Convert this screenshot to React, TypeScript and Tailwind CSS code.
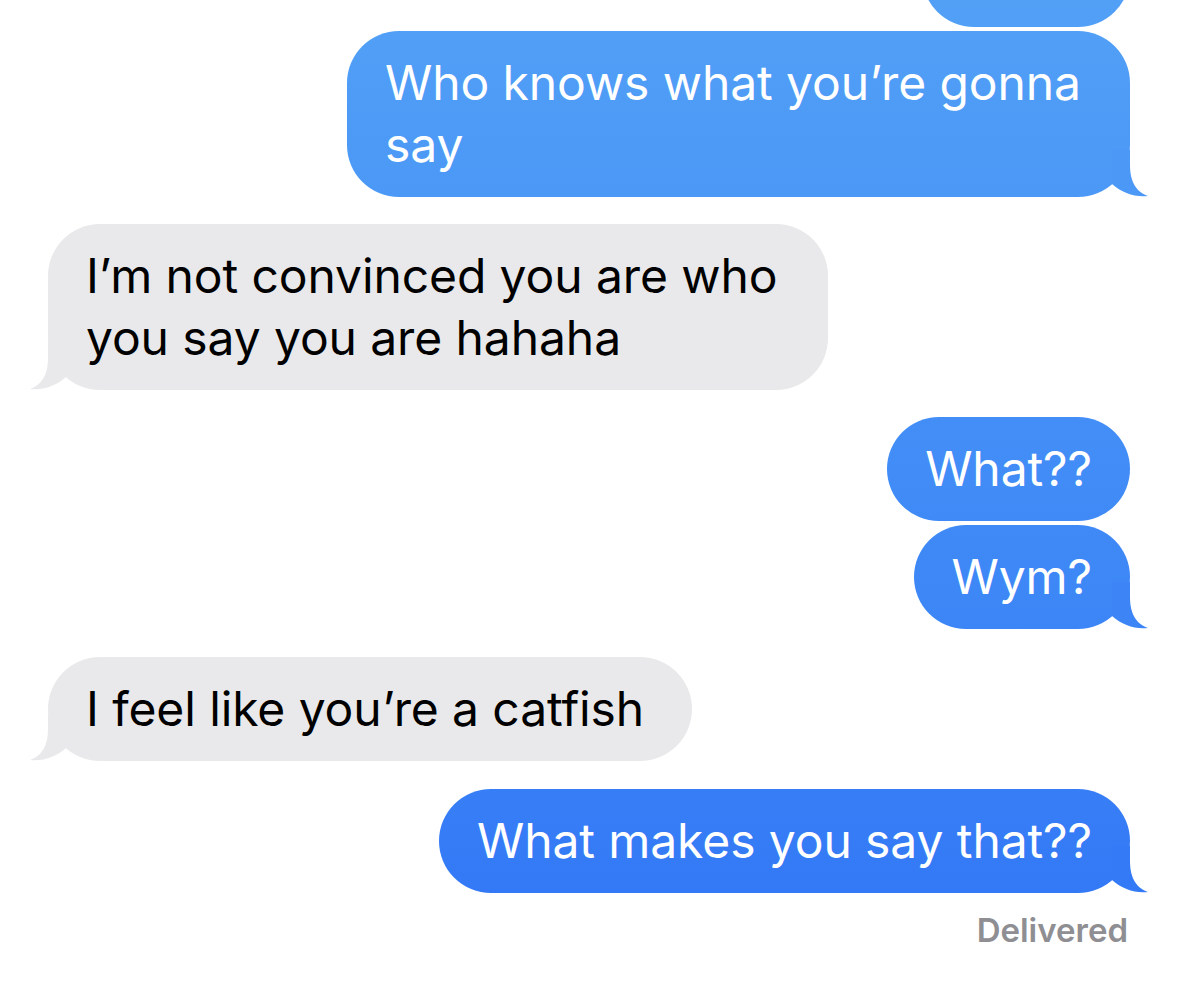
import React from 'react';

type Msg = { id: number; text: React.ReactNode; me: boolean; tail?: string; width?: string };

// tail colours are sampled from where each tail sits in the screen-wide gradient
const messages: Msg[] = [
  { id: 1, text: <>Who knows what you’re gonna<br />say</>, me: true, tail: '#4c98f6', width: 'w-[783px]' },
  { id: 2, text: <>I’m not convinced you are who<br />you say you are hahaha</>, me: false, tail: '#e9e9eb', width: 'w-[780px]' },
  { id: 3, text: 'What??', me: true },
  { id: 4, text: 'Wym?', me: true, tail: '#3d85f6' },
  { id: 5, text: 'I feel like you’re a catfish', me: false, tail: '#e9e9eb', width: 'w-[644px]' },
  { id: 6, text: 'What makes you say that??', me: true, tail: '#347af6' },
];

function Tail({ color, left }: { color: string; left?: boolean }) {
  return (
    <svg
      width="50"
      height="47"
      viewBox="0 0 50 47"
      className={`absolute bottom-0 ${left ? 'left-[-20px] -scale-x-100' : 'right-[-20px]'}`}
    >
      <path d="M30 0 L30 15 C30 33 37 42 48 46 C35 47.5 22 43 12 34 L12 0 Z" fill={color} />
    </svg>
  );
}

function Bubble({ msg }: { msg: Msg }) {
  const base =
    'relative whitespace-nowrap rounded-[52px] px-[38px] py-[21px] text-[48px] leading-[62px] tracking-[-0.1px]';
  if (msg.me) {
    return (
      <div className="flex justify-end">
        <div
          className={`${base} ${msg.width ?? ''} bg-fixed bg-linear-to-b from-[#52a0f6] to-[#3175f6] text-white`}
        >
          {msg.text}
          {msg.tail && <Tail color={msg.tail} />}
        </div>
      </div>
    );
  }
  return (
    <div className="flex justify-start">
      <div className={`${base} ${msg.width ?? ''} bg-[#e9e9eb] text-black`}>
        {msg.text}
        {msg.tail && <Tail color={msg.tail} left />}
      </div>
    </div>
  );
}

export default function App() {
  return (
    <div
      className="w-[1179px] h-[984px] overflow-hidden bg-white pl-[48px] pr-[49px]"
      style={{ fontFamily: 'Inter, "Noto Sans", sans-serif' }}
    >
      <div className="flex justify-end -mt-[77px]">
        <div className="w-[208px] h-[104px] rounded-[52px] bg-fixed bg-linear-to-b from-[#52a0f6] to-[#3175f6]" />
      </div>

      <div className="flex flex-col mt-[4px]">
        <Bubble msg={messages[0]} />
        <div className="mt-[27px]"><Bubble msg={messages[1]} /></div>
        <div className="mt-[27px]"><Bubble msg={messages[2]} /></div>
        <div className="mt-[4px]"><Bubble msg={messages[3]} /></div>
        <div className="mt-[28px]"><Bubble msg={messages[4]} /></div>
        <div className="mt-[28px]"><Bubble msg={messages[5]} /></div>
        <div className="mt-[18px] pr-[2px] text-right text-[33px] leading-[38px] font-semibold text-[#8e8e93]">
          Delivered
        </div>
      </div>
    </div>
  );
}
